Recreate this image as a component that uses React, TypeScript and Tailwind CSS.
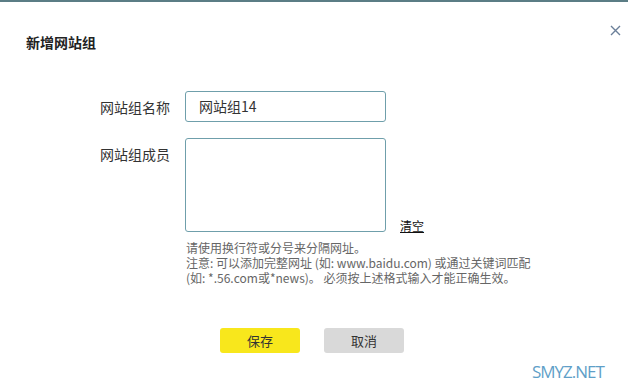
import React from "react";

const font = { fontFamily: '"Noto Sans CJK SC", "Microsoft YaHei", sans-serif' };

export default function App() {
  return (
    <div
      className="relative w-[628px] h-[388px] overflow-hidden bg-white border-t-2 border-[#5b7d85] text-[#333]"
      style={font}
    >
      <button className="absolute right-[5px] top-[20px] w-[16px] h-[16px] flex items-center justify-center">
        <svg width="11" height="11" viewBox="0 0 11 11" fill="none" stroke="#6b7f99" strokeWidth="1.4">
          <path d="M1 1L10 10M10 1L1 10" />
        </svg>
      </button>

      <div className="pl-[26px] pt-[30px] text-[14px] leading-[20px] font-bold text-[#222]">新增网站组</div>

      <div className="mt-[39px] flex flex-col gap-[16px]">
        <div className="flex items-center">
          <div className="w-[170px] text-right text-[14px] leading-[20px] text-[#333]">网站组名称</div>
          <div className="ml-[15px] w-[201px] h-[31px] border border-[#6f9fab] rounded-[3px] pl-[13px] flex items-center text-[14px] text-[#333]">
            网站组14
          </div>
        </div>
        <div className="flex items-start">
          <div className="w-[170px] text-right text-[14px] leading-[20px] pt-[6px] text-[#333]">网站组成员</div>
          <div className="ml-[15px] w-[201px] h-[94px] border border-[#6f9fab] rounded-[3px]" />
          <div className="self-end ml-[14px] mb-[-2px] text-[12px] leading-[16px] underline text-[#111]">清空</div>
        </div>
      </div>

      <div className="ml-[186px] mt-[9px] flex flex-col gap-[1px] text-[12px] leading-[14px] text-[#666] whitespace-nowrap">
        <div>请使用换行符或分号来分隔网址。</div>
        <div>注意: 可以添加完整网址 (如: www.baidu.com) 或通过关键词匹配</div>
        <div>(如: *.56.com或*news)。 必须按上述格式输入才能正确生效。</div>
      </div>

      <div className="ml-[220px] mt-[43px] flex gap-[24px]">
        <button className="w-[80px] h-[25px] rounded-[3px] bg-[#f8e71c] text-[13px] text-[#333] flex items-center justify-center">
          保存
        </button>
        <button className="w-[80px] h-[25px] rounded-[3px] bg-[#d9d9d9] text-[13px] text-[#333] flex items-center justify-center">
          取消
        </button>
      </div>

      <div
        className="absolute left-[532px] top-[359px] text-[17px] leading-[22px] text-[#5f9fc8] tracking-[-1px]"
        style={{ fontFamily: '"Open Sans", "Noto Sans", sans-serif' }}
      >
        SMYZ.NET
      </div>
    </div>
  );
}
